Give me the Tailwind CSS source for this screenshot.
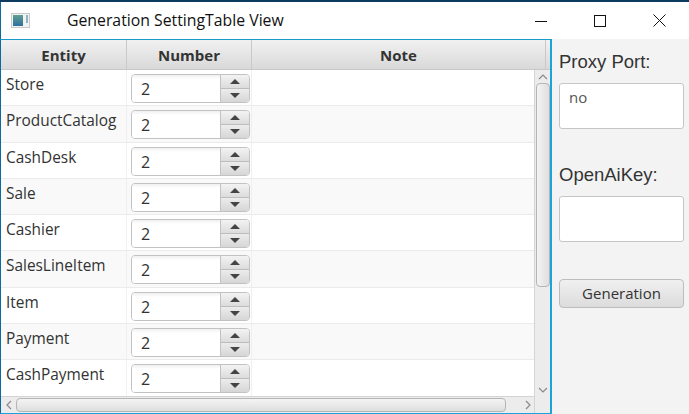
<!DOCTYPE html>
<html lang="en">
<head>
    <meta charset="UTF-8">
    <title>Generation SettingTable View</title>
    <script src="https://cdn.jsdelivr.net/npm/@tailwindcss/browser@4"></script>
</head>
<body class="w-[689px] h-[414px] overflow-hidden bg-white font-['Open_Sans',sans-serif] text-[#333]">
    <div class="h-[2px] bg-[#0b3b5f]"></div>

    <!-- Title bar -->
    <div class="h-[37px] flex items-center border-l border-[#0b6a9e] bg-white">
        <svg class="ml-[10px] mt-[-1px]" width="19" height="15" viewBox="0 0 19 15">
            <defs><linearGradient id="ico" x1="0" y1="0" x2="0" y2="1"><stop offset="0" stop-color="#5f9f8f"/><stop offset="1" stop-color="#2f6f9e"/></linearGradient></defs>
            <rect x="0.5" y="0.5" width="18" height="14" fill="#f2f2f2" stroke="#c9c9c9"/>
            <rect x="2" y="2" width="10" height="11" fill="url(#ico)"/>
            <rect x="15" y="2" width="2" height="8" fill="#8fb4c2"/>
        </svg>
        <div class="ml-[37px] text-[15.8px] text-[#111]">Generation SettingTable View</div>
        <div class="ml-auto flex items-center">
            <svg width="12" height="12" viewBox="0 0 12 12" class="mr-[47px]"><path d="M0 6.5H12" stroke="#111"/></svg>
            <svg width="12" height="12" viewBox="0 0 12 12" class="mr-[47px]"><rect x="0.5" y="0.5" width="11" height="11" fill="none" stroke="#111"/></svg>
            <svg width="13" height="13" viewBox="0 0 13 13" class="mr-[23px]"><path d="M0.5 0.5L12.5 12.5M12.5 0.5L0.5 12.5" stroke="#111"/></svg>
        </div>
    </div>

    <div class="flex h-[375px]">
        <!-- Table panel -->
        <div class="w-[552px] h-full flex flex-col border-l border-t border-r-2 border-b border-l-[#0b6a9e] border-t-[#1a9ac9] border-r-[#1ba3dc] border-b-[#1ba3dc] bg-[#ececec]">
            <div class="h-[30px] shrink-0 flex text-[15px] font-bold text-[#333] bg-gradient-to-b from-[#f1f1f1] to-[#d9d9d9] border-b border-[#c8c8c8]">
                <div class="w-[126px] pt-[2px] flex items-center justify-center border-r border-[#c9c9c9]">Entity</div>
                <div class="w-[125px] pt-[2px] flex items-center justify-center border-r border-[#c9c9c9]">Number</div>
                <div class="w-[294px] pt-[2px] flex items-center justify-center border-r border-[#c9c9c9]">Note</div>
            </div>

            <div class="flex flex-1 min-h-0">
                <div class="w-[533px] flex flex-col">
                    <div class="h-[326px] overflow-hidden bg-white text-[15.4px] leading-[20px] text-[#333]">
                        <div class="h-[36.28px] flex border-b border-[#ebebeb] bg-white">
                            <div class="w-[126px] pl-[5px] pt-[5px] border-r border-[#f0f0f0] whitespace-nowrap">Store</div>
                            <div class="w-[125px] pl-[4px] pt-[4px] border-r border-[#f0f0f0]">
                                <div class="w-[119px] h-[29px] flex rounded-[4px] border border-[#c2c2c2] overflow-hidden">
                                    <div class="w-[88px] pl-[9px] pt-[4px] text-[16px] bg-gradient-to-b from-[#f0f0f0] to-white to-[15%]">2</div>
                                    <div class="w-[29px] flex flex-col border-l border-[#c2c2c2]">
                                        <div class="h-[14px] flex items-center justify-center bg-gradient-to-b from-[#f3f3f3] to-[#dcdcdc] border-b border-[#bdbdbd]"><div class="border-x-[5px] border-x-transparent border-b-[5px] border-b-[#444]"></div></div>
                                        <div class="flex-1 flex items-center justify-center bg-gradient-to-b from-[#ececec] to-[#d6d6d6]"><div class="border-x-[5px] border-x-transparent border-t-[5px] border-t-[#444]"></div></div>
                                    </div>
                                </div>
                            </div>
                        </div>
                        <div class="h-[36.28px] flex border-b border-[#ebebeb] bg-[#f9f9f9]">
                            <div class="w-[126px] pl-[5px] pt-[5px] border-r border-[#f0f0f0] whitespace-nowrap">ProductCatalog</div>
                            <div class="w-[125px] pl-[4px] pt-[4px] border-r border-[#f0f0f0]">
                                <div class="w-[119px] h-[29px] flex rounded-[4px] border border-[#c2c2c2] overflow-hidden">
                                    <div class="w-[88px] pl-[9px] pt-[4px] text-[16px] bg-gradient-to-b from-[#f0f0f0] to-white to-[15%]">2</div>
                                    <div class="w-[29px] flex flex-col border-l border-[#c2c2c2]">
                                        <div class="h-[14px] flex items-center justify-center bg-gradient-to-b from-[#f3f3f3] to-[#dcdcdc] border-b border-[#bdbdbd]"><div class="border-x-[5px] border-x-transparent border-b-[5px] border-b-[#444]"></div></div>
                                        <div class="flex-1 flex items-center justify-center bg-gradient-to-b from-[#ececec] to-[#d6d6d6]"><div class="border-x-[5px] border-x-transparent border-t-[5px] border-t-[#444]"></div></div>
                                    </div>
                                </div>
                            </div>
                        </div>
                        <div class="h-[36.28px] flex border-b border-[#ebebeb] bg-white">
                            <div class="w-[126px] pl-[5px] pt-[5px] border-r border-[#f0f0f0] whitespace-nowrap">CashDesk</div>
                            <div class="w-[125px] pl-[4px] pt-[4px] border-r border-[#f0f0f0]">
                                <div class="w-[119px] h-[29px] flex rounded-[4px] border border-[#c2c2c2] overflow-hidden">
                                    <div class="w-[88px] pl-[9px] pt-[4px] text-[16px] bg-gradient-to-b from-[#f0f0f0] to-white to-[15%]">2</div>
                                    <div class="w-[29px] flex flex-col border-l border-[#c2c2c2]">
                                        <div class="h-[14px] flex items-center justify-center bg-gradient-to-b from-[#f3f3f3] to-[#dcdcdc] border-b border-[#bdbdbd]"><div class="border-x-[5px] border-x-transparent border-b-[5px] border-b-[#444]"></div></div>
                                        <div class="flex-1 flex items-center justify-center bg-gradient-to-b from-[#ececec] to-[#d6d6d6]"><div class="border-x-[5px] border-x-transparent border-t-[5px] border-t-[#444]"></div></div>
                                    </div>
                                </div>
                            </div>
                        </div>
                        <div class="h-[36.28px] flex border-b border-[#ebebeb] bg-[#f9f9f9]">
                            <div class="w-[126px] pl-[5px] pt-[5px] border-r border-[#f0f0f0] whitespace-nowrap">Sale</div>
                            <div class="w-[125px] pl-[4px] pt-[4px] border-r border-[#f0f0f0]">
                                <div class="w-[119px] h-[29px] flex rounded-[4px] border border-[#c2c2c2] overflow-hidden">
                                    <div class="w-[88px] pl-[9px] pt-[4px] text-[16px] bg-gradient-to-b from-[#f0f0f0] to-white to-[15%]">2</div>
                                    <div class="w-[29px] flex flex-col border-l border-[#c2c2c2]">
                                        <div class="h-[14px] flex items-center justify-center bg-gradient-to-b from-[#f3f3f3] to-[#dcdcdc] border-b border-[#bdbdbd]"><div class="border-x-[5px] border-x-transparent border-b-[5px] border-b-[#444]"></div></div>
                                        <div class="flex-1 flex items-center justify-center bg-gradient-to-b from-[#ececec] to-[#d6d6d6]"><div class="border-x-[5px] border-x-transparent border-t-[5px] border-t-[#444]"></div></div>
                                    </div>
                                </div>
                            </div>
                        </div>
                        <div class="h-[36.28px] flex border-b border-[#ebebeb] bg-white">
                            <div class="w-[126px] pl-[5px] pt-[5px] border-r border-[#f0f0f0] whitespace-nowrap">Cashier</div>
                            <div class="w-[125px] pl-[4px] pt-[4px] border-r border-[#f0f0f0]">
                                <div class="w-[119px] h-[29px] flex rounded-[4px] border border-[#c2c2c2] overflow-hidden">
                                    <div class="w-[88px] pl-[9px] pt-[4px] text-[16px] bg-gradient-to-b from-[#f0f0f0] to-white to-[15%]">2</div>
                                    <div class="w-[29px] flex flex-col border-l border-[#c2c2c2]">
                                        <div class="h-[14px] flex items-center justify-center bg-gradient-to-b from-[#f3f3f3] to-[#dcdcdc] border-b border-[#bdbdbd]"><div class="border-x-[5px] border-x-transparent border-b-[5px] border-b-[#444]"></div></div>
                                        <div class="flex-1 flex items-center justify-center bg-gradient-to-b from-[#ececec] to-[#d6d6d6]"><div class="border-x-[5px] border-x-transparent border-t-[5px] border-t-[#444]"></div></div>
                                    </div>
                                </div>
                            </div>
                        </div>
                        <div class="h-[36.28px] flex border-b border-[#ebebeb] bg-[#f9f9f9]">
                            <div class="w-[126px] pl-[5px] pt-[5px] border-r border-[#f0f0f0] whitespace-nowrap">SalesLineItem</div>
                            <div class="w-[125px] pl-[4px] pt-[4px] border-r border-[#f0f0f0]">
                                <div class="w-[119px] h-[29px] flex rounded-[4px] border border-[#c2c2c2] overflow-hidden">
                                    <div class="w-[88px] pl-[9px] pt-[4px] text-[16px] bg-gradient-to-b from-[#f0f0f0] to-white to-[15%]">2</div>
                                    <div class="w-[29px] flex flex-col border-l border-[#c2c2c2]">
                                        <div class="h-[14px] flex items-center justify-center bg-gradient-to-b from-[#f3f3f3] to-[#dcdcdc] border-b border-[#bdbdbd]"><div class="border-x-[5px] border-x-transparent border-b-[5px] border-b-[#444]"></div></div>
                                        <div class="flex-1 flex items-center justify-center bg-gradient-to-b from-[#ececec] to-[#d6d6d6]"><div class="border-x-[5px] border-x-transparent border-t-[5px] border-t-[#444]"></div></div>
                                    </div>
                                </div>
                            </div>
                        </div>
                        <div class="h-[36.28px] flex border-b border-[#ebebeb] bg-white">
                            <div class="w-[126px] pl-[5px] pt-[5px] border-r border-[#f0f0f0] whitespace-nowrap">Item</div>
                            <div class="w-[125px] pl-[4px] pt-[4px] border-r border-[#f0f0f0]">
                                <div class="w-[119px] h-[29px] flex rounded-[4px] border border-[#c2c2c2] overflow-hidden">
                                    <div class="w-[88px] pl-[9px] pt-[4px] text-[16px] bg-gradient-to-b from-[#f0f0f0] to-white to-[15%]">2</div>
                                    <div class="w-[29px] flex flex-col border-l border-[#c2c2c2]">
                                        <div class="h-[14px] flex items-center justify-center bg-gradient-to-b from-[#f3f3f3] to-[#dcdcdc] border-b border-[#bdbdbd]"><div class="border-x-[5px] border-x-transparent border-b-[5px] border-b-[#444]"></div></div>
                                        <div class="flex-1 flex items-center justify-center bg-gradient-to-b from-[#ececec] to-[#d6d6d6]"><div class="border-x-[5px] border-x-transparent border-t-[5px] border-t-[#444]"></div></div>
                                    </div>
                                </div>
                            </div>
                        </div>
                        <div class="h-[36.28px] flex border-b border-[#ebebeb] bg-[#f9f9f9]">
                            <div class="w-[126px] pl-[5px] pt-[5px] border-r border-[#f0f0f0] whitespace-nowrap">Payment</div>
                            <div class="w-[125px] pl-[4px] pt-[4px] border-r border-[#f0f0f0]">
                                <div class="w-[119px] h-[29px] flex rounded-[4px] border border-[#c2c2c2] overflow-hidden">
                                    <div class="w-[88px] pl-[9px] pt-[4px] text-[16px] bg-gradient-to-b from-[#f0f0f0] to-white to-[15%]">2</div>
                                    <div class="w-[29px] flex flex-col border-l border-[#c2c2c2]">
                                        <div class="h-[14px] flex items-center justify-center bg-gradient-to-b from-[#f3f3f3] to-[#dcdcdc] border-b border-[#bdbdbd]"><div class="border-x-[5px] border-x-transparent border-b-[5px] border-b-[#444]"></div></div>
                                        <div class="flex-1 flex items-center justify-center bg-gradient-to-b from-[#ececec] to-[#d6d6d6]"><div class="border-x-[5px] border-x-transparent border-t-[5px] border-t-[#444]"></div></div>
                                    </div>
                                </div>
                            </div>
                        </div>
                        <div class="h-[36.28px] flex bg-white">
                            <div class="w-[126px] pl-[5px] pt-[5px] border-r border-[#f0f0f0] whitespace-nowrap">CashPayment</div>
                            <div class="w-[125px] pl-[4px] pt-[4px] border-r border-[#f0f0f0]">
                                <div class="w-[119px] h-[29px] flex rounded-[4px] border border-[#c2c2c2] overflow-hidden">
                                    <div class="w-[88px] pl-[9px] pt-[4px] text-[16px] bg-gradient-to-b from-[#f0f0f0] to-white to-[15%]">2</div>
                                    <div class="w-[29px] flex flex-col border-l border-[#c2c2c2]">
                                        <div class="h-[14px] flex items-center justify-center bg-gradient-to-b from-[#f3f3f3] to-[#dcdcdc] border-b border-[#bdbdbd]"><div class="border-x-[5px] border-x-transparent border-b-[5px] border-b-[#444]"></div></div>
                                        <div class="flex-1 flex items-center justify-center bg-gradient-to-b from-[#ececec] to-[#d6d6d6]"><div class="border-x-[5px] border-x-transparent border-t-[5px] border-t-[#444]"></div></div>
                                    </div>
                                </div>
                            </div>
                        </div>
                    </div>

                    <!-- Horizontal scrollbar -->
                    <div class="flex-1 flex items-center bg-[#ececec] border-t border-[#d4d4d4]">
                        <svg class="ml-[5px]" width="6" height="10" viewBox="0 0 6 10"><path d="M5 1L1 5L5 9" fill="none" stroke="#8a8a8a" stroke-width="1.2"/></svg>
                        <div class="ml-[4px] w-[490px] h-[14px] rounded-[4px] border border-[#b5b5b5] bg-gradient-to-b from-[#f4f4f4] to-[#dedede]"></div>
                        <svg class="ml-[19px]" width="6" height="10" viewBox="0 0 6 10"><path d="M1 1L5 5L1 9" fill="none" stroke="#8a8a8a" stroke-width="1.2"/></svg>
                    </div>
                </div>

                <!-- Vertical scrollbar -->
                <div class="w-[16px] flex flex-col items-center bg-[#ececec] border-l border-[#d4d4d4]">
                    <svg class="mt-[4px]" width="10" height="6" viewBox="0 0 10 6"><path d="M1 5L5 1L9 5" fill="none" stroke="#8a8a8a" stroke-width="1.2"/></svg>
                    <div class="mt-[3px] w-[14px] h-[204px] rounded-[4px] border border-[#b5b5b5] bg-gradient-to-r from-[#f4f4f4] to-[#dedede]"></div>
                    <svg class="mt-auto mb-[20px]" width="10" height="6" viewBox="0 0 10 6"><path d="M1 1L5 5L9 1" fill="none" stroke="#8a8a8a" stroke-width="1.2"/></svg>
                </div>
            </div>
        </div>

        <!-- Side panel -->
        <div class="w-[137px] h-full bg-[#f3f3f3] pl-[7px] pr-[5px] pt-[11px] flex flex-col">
            <div class="text-[18.5px] leading-[24px] font-['Liberation_Sans',sans-serif] text-[#333]">Proxy Port:</div>
            <div class="mt-[9px] h-[46px] rounded-[3px] border border-[#c6c6c6] bg-white pl-[9px] pt-[3px] text-[15px] leading-[20px] text-[#555]">no</div>
            <div class="mt-[34px] text-[18.5px] leading-[24px] font-['Liberation_Sans',sans-serif] text-[#333]">OpenAiKey:</div>
            <div class="mt-[9px] h-[46px] rounded-[3px] border border-[#c6c6c6] bg-white"></div>
            <div class="mt-[37px] h-[29px] rounded-[4px] border border-[#bdbdbd] bg-gradient-to-b from-[#f0f0f0] to-[#dcdcdc] flex items-center justify-center text-[15px] text-[#333]">Generation</div>
        </div>
    </div>
</body>
</html>
